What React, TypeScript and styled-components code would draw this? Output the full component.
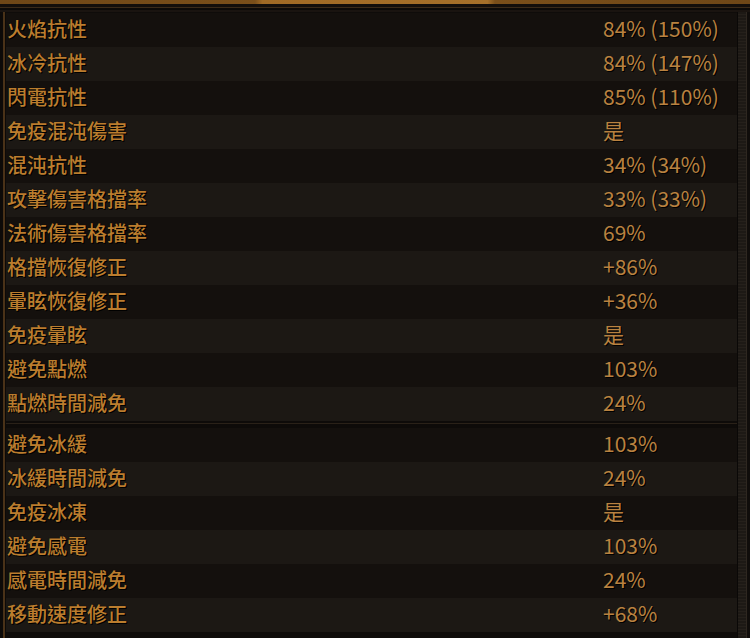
import React from "react";
import styled, { createGlobalStyle } from "styled-components";

const Global = createGlobalStyle`
  html, body { margin: 0; padding: 0; background: #0d0a08; }
  body { font-family: "Noto Sans CJK TC", "Noto Sans", sans-serif; }
`;

type Stat = { label: string; value: string };

const groupA: Stat[] = [
  { label: "火焰抗性", value: "84% (150%)" },
  { label: "冰冷抗性", value: "84% (147%)" },
  { label: "閃電抗性", value: "85% (110%)" },
  { label: "免疫混沌傷害", value: "是" },
  { label: "混沌抗性", value: "34% (34%)" },
  { label: "攻擊傷害格擋率", value: "33% (33%)" },
  { label: "法術傷害格擋率", value: "69%" },
  { label: "格擋恢復修正", value: "+86%" },
  { label: "暈眩恢復修正", value: "+36%" },
  { label: "免疫暈眩", value: "是" },
  { label: "避免點燃", value: "103%" },
  { label: "點燃時間減免", value: "24%" },
];

const groupB: Stat[] = [
  { label: "避免冰緩", value: "103%" },
  { label: "冰緩時間減免", value: "24%" },
  { label: "免疫冰凍", value: "是" },
  { label: "避免感電", value: "103%" },
  { label: "感電時間減免", value: "24%" },
  { label: "移動速度修正", value: "+68%" },
];

const Frame = styled.div`
  width: 750px;
  height: 638px;
  overflow: hidden;
  display: flex;
  flex-direction: column;
  background: #0f0c0a;
`;

const TopBar = styled.div`
  height: 4px;
  flex: none;
  background: linear-gradient(90deg, #6e4717 0%, #7a4f1a 34%, #a06a25 35%, #a5702a 65%, #7a4f1a 66%, #6e4717 100%);
`;

const TopTrim = styled.div`
  height: 8px;
  flex: none;
  background: linear-gradient(180deg, #120e0b 0px, #120e0b 3px, #3a2a18 3px, #3a2a18 4px, #0c0a08 4px, #0c0a08 6px, #1a1410 6px);
`;

const Body = styled.div`
  flex: 1;
  display: flex;
  min-height: 0;
`;

const LeftEdge = styled.div`
  width: 6px;
  flex: none;
  background: linear-gradient(90deg, #0d0a08 0px, #0d0a08 3px, #4a3218 3px, #4a3218 5px, #0d0a08 5px);
`;

const Table = styled.div`
  flex: 1;
  display: flex;
  flex-direction: column;
  margin-top: 1px;
`;

const Group = styled.div`
  display: flex;
  flex-direction: column;
`;

const Separator = styled.div`
  height: 7px;
  flex: none;
  background: linear-gradient(180deg, #0e0b09 0px, #0e0b09 2px, #2a2118 2px, #2a2118 3px, #0e0b09 3px);
`;

const Row = styled.div<{ $alt: boolean }>`
  height: 34px;
  flex: none;
  display: flex;
  align-items: center;
  box-sizing: border-box;
  padding-bottom: 4px;
  background: ${(p) => (p.$alt ? "#1c1814" : "#14100d")};
`;

const Label = styled.span`
  width: 596px;
  padding-left: 1px;
  flex: none;
  font-family: "Noto Sans CJK TC", "Noto Sans", sans-serif;
  font-size: 20px;
  font-weight: 500;
  color: #bb7d2e;
  text-shadow: 0 0 1px #000, 1px 1px 0 #000;
  white-space: nowrap;
`;

const Value = styled.span`
  font-family: "Noto Sans CJK TC", "Noto Sans", sans-serif;
  font-size: 21px;
  font-weight: 400;
  color: #b98240;
  text-shadow: 1px 1px 0 #000;
  white-space: nowrap;
`;

const Scrollbar = styled.div`
  width: 13px;
  flex: none;
  display: flex;
`;

const Track = styled.div`
  width: 8px;
  background: repeating-linear-gradient(180deg, #1d1915 0px, #1d1915 2px, #25201b 2px, #25201b 3px);
  border-left: 1px solid #0a0807;
  border-right: 1px solid #2e2720;
`;

const RightEdge = styled.div`
  flex: 1;
  background: #100d0b;
`;

function StatRows({ stats }: { stats: Stat[] }) {
  return (
    <Group>
      {stats.map((s, i) => (
        <Row key={s.label} $alt={i % 2 === 1}>
          <Label>{s.label}</Label>
          <Value>{s.value}</Value>
        </Row>
      ))}
    </Group>
  );
}

export default function App() {
  return (
    <>
      <Global />
      <Frame>
        <TopBar />
        <TopTrim />
        <Body>
          <LeftEdge />
          <Table>
            <StatRows stats={groupA} />
            <Separator />
            <StatRows stats={groupB} />
          </Table>
          <Scrollbar>
            <Track />
            <RightEdge />
          </Scrollbar>
        </Body>
      </Frame>
    </>
  );
}
